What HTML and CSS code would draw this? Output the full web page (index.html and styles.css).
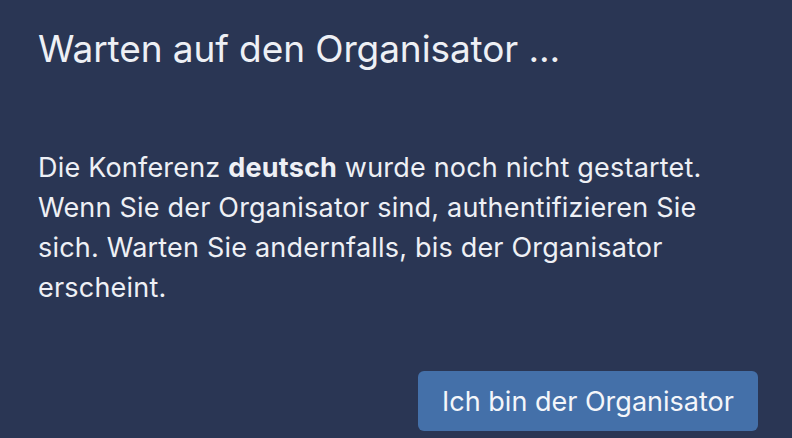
FILE: index.html
```html
<!DOCTYPE html>
<html lang="de">
<head>
<meta charset="utf-8">
<title>Warten auf den Organisator</title>
<link rel="stylesheet" href="styles.css">
</head>
<body>
<div class="dialog">
  <h1 class="title">Warten auf den Organisator ...</h1>
  <p class="message">Die Konferenz <strong>deutsch</strong> wurde noch nicht gestartet. Wenn Sie der Organisator sind, authentifizieren Sie sich. Warten Sie andernfalls, bis der Organisator erscheint.</p>
  <div class="actions">
    <button class="btn-primary">Ich bin der Organisator</button>
  </div>
</div>
</body>
</html>
```
FILE: styles.css
```css
html, body {
  margin: 0;
  padding: 0;
  background: #2a3654;
  height: 100%;
}
body {
  font-family: Inter, "Noto Sans", sans-serif;
  color: #eef0f5;
}
.dialog {
  box-sizing: border-box;
  height: 438px;
  padding: 25px 34px 7px 38px;
  display: flex;
  flex-direction: column;
}
.title {
  margin: 0;
  font-size: 37px;
  font-weight: 400;
  line-height: 48px;
  letter-spacing: -0.1px;
}
.message {
  margin: 75px 0 0 0;
  font-size: 27px;
  line-height: 40px;
  letter-spacing: 0.2px;
  width: 710px;
}
.message strong {
  font-weight: 700;
}
.actions {
  margin-top: auto;
  display: flex;
  justify-content: flex-end;
}
.btn-primary {
  width: 340px;
  height: 60px;
  border: none;
  border-radius: 6px;
  background: #4470a9;
  color: #f4f6fa;
  font-family: Inter, "Noto Sans", sans-serif;
  font-size: 27px;
  padding: 0;
}
```
